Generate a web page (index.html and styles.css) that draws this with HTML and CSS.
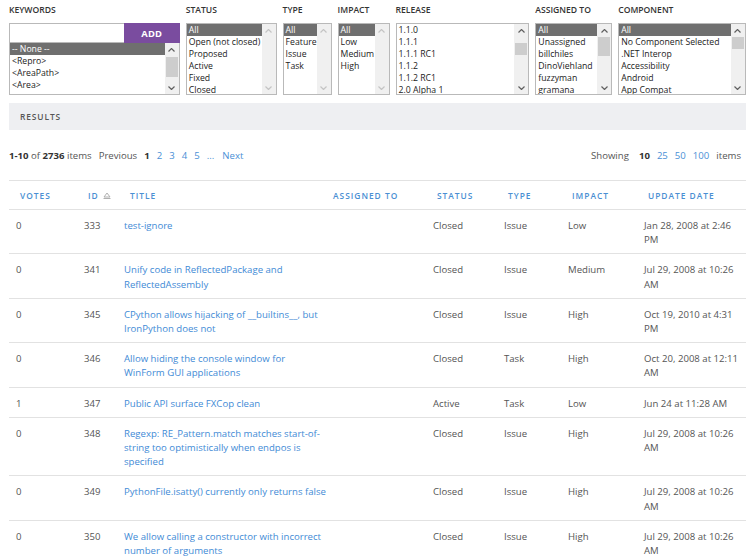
FILE: index.html
```html
<!DOCTYPE html>
<html lang="en">
<head>
<meta charset="utf-8">
<title>Issues</title>
<link rel="stylesheet" href="styles.css">
</head>
<body>
<div class="page">
  <div class="filters">
    <div class="filter f-keywords">
      <div class="flabel">Keywords</div>
      <div class="kw-row">
        <div class="kw-input"></div>
        <button class="add-btn">ADD</button>
      </div>
      <div class="listbox kw-list">
        <ul class="items">
          <li class="sel">-- None --</li>
          <li>&lt;Repro&gt;</li>
          <li>&lt;AreaPath&gt;</li>
          <li>&lt;Area&gt;</li>
        </ul>
        <div class="sbar">
          <div class="sbtn"><svg viewBox="0 0 7 4" width="7" height="4"><polyline points="0.5,3.5 3.5,0.5 6.5,3.5"/></svg></div>
          <div class="track"><div class="thumb" style="margin-top:1px;height:20px"></div></div>
          <div class="sbtn"><svg viewBox="0 0 7 4" width="7" height="4"><polyline points="0.5,0.5 3.5,3.5 6.5,0.5"/></svg></div>
        </div>
      </div>
    </div>

    <div class="filter f-status">
      <div class="flabel">Status</div>
      <div class="listbox">
        <ul class="items">
          <li class="sel">All</li>
          <li>Open (not closed)</li>
          <li>Proposed</li>
          <li>Active</li>
          <li>Fixed</li>
          <li>Closed</li>
        </ul>
        <div class="sbar disabled">
          <div class="sbtn"><svg viewBox="0 0 7 4" width="7" height="4"><polyline points="0.5,3.5 3.5,0.5 6.5,3.5"/></svg></div>
          <div class="track"></div>
          <div class="sbtn"><svg viewBox="0 0 7 4" width="7" height="4"><polyline points="0.5,0.5 3.5,3.5 6.5,0.5"/></svg></div>
        </div>
      </div>
    </div>

    <div class="filter f-type">
      <div class="flabel">Type</div>
      <div class="listbox">
        <ul class="items">
          <li class="sel">All</li>
          <li>Feature</li>
          <li>Issue</li>
          <li>Task</li>
        </ul>
        <div class="sbar disabled">
          <div class="sbtn"><svg viewBox="0 0 7 4" width="7" height="4"><polyline points="0.5,3.5 3.5,0.5 6.5,3.5"/></svg></div>
          <div class="track"></div>
          <div class="sbtn"><svg viewBox="0 0 7 4" width="7" height="4"><polyline points="0.5,0.5 3.5,3.5 6.5,0.5"/></svg></div>
        </div>
      </div>
    </div>

    <div class="filter f-impact">
      <div class="flabel">Impact</div>
      <div class="listbox">
        <ul class="items">
          <li class="sel">All</li>
          <li>Low</li>
          <li>Medium</li>
          <li>High</li>
        </ul>
        <div class="sbar disabled">
          <div class="sbtn"><svg viewBox="0 0 7 4" width="7" height="4"><polyline points="0.5,3.5 3.5,0.5 6.5,3.5"/></svg></div>
          <div class="track"></div>
          <div class="sbtn"><svg viewBox="0 0 7 4" width="7" height="4"><polyline points="0.5,0.5 3.5,3.5 6.5,0.5"/></svg></div>
        </div>
      </div>
    </div>

    <div class="filter f-release">
      <div class="flabel">Release</div>
      <div class="listbox">
        <ul class="items">
          <li>1.1.0</li>
          <li>1.1.1</li>
          <li>1.1.1 RC1</li>
          <li>1.1.2</li>
          <li>1.1.2 RC1</li>
          <li>2.0 Alpha 1</li>
        </ul>
        <div class="sbar">
          <div class="sbtn"><svg viewBox="0 0 7 4" width="7" height="4"><polyline points="0.5,3.5 3.5,0.5 6.5,3.5"/></svg></div>
          <div class="track"><div class="thumb" style="margin-top:6px;height:12px"></div></div>
          <div class="sbtn"><svg viewBox="0 0 7 4" width="7" height="4"><polyline points="0.5,0.5 3.5,3.5 6.5,0.5"/></svg></div>
        </div>
      </div>
    </div>

    <div class="filter f-assigned">
      <div class="flabel">Assigned To</div>
      <div class="listbox">
        <ul class="items">
          <li class="sel">All</li>
          <li>Unassigned</li>
          <li>billchiles</li>
          <li>DinoViehland</li>
          <li>fuzzyman</li>
          <li>gramana</li>
        </ul>
        <div class="sbar">
          <div class="sbtn"><svg viewBox="0 0 7 4" width="7" height="4"><polyline points="0.5,3.5 3.5,0.5 6.5,3.5"/></svg></div>
          <div class="track"><div class="thumb" style="margin-top:0;height:19px"></div></div>
          <div class="sbtn"><svg viewBox="0 0 7 4" width="7" height="4"><polyline points="0.5,0.5 3.5,3.5 6.5,0.5"/></svg></div>
        </div>
      </div>
    </div>

    <div class="filter f-component">
      <div class="flabel">Component</div>
      <div class="listbox">
        <ul class="items">
          <li class="sel">All</li>
          <li>No Component Selected</li>
          <li>.NET Interop</li>
          <li>Accessibility</li>
          <li>Android</li>
          <li>App Compat</li>
        </ul>
        <div class="sbar">
          <div class="sbtn"><svg viewBox="0 0 7 4" width="7" height="4"><polyline points="0.5,3.5 3.5,0.5 6.5,3.5"/></svg></div>
          <div class="track"><div class="thumb" style="margin-top:0;height:12px"></div></div>
          <div class="sbtn"><svg viewBox="0 0 7 4" width="7" height="4"><polyline points="0.5,0.5 3.5,3.5 6.5,0.5"/></svg></div>
        </div>
      </div>
    </div>
  </div>

  <div class="results-bar">Results</div>

  <div class="pager">
    <div class="pager-left">
      <span class="count"><b>1-10</b> of <b>2736</b> items</span>
      <span class="prev">Previous</span>
      <span class="pages"><b>1</b><a>2</a><a>3</a><a>4</a><a>5</a><a>...</a></span>
      <a class="next">Next</a>
    </div>
    <div class="pager-right">
      <span>Showing</span>
      <span class="sizes"><b>10</b><a>25</a><a>50</a><a>100</a></span>
      <span>items</span>
    </div>
  </div>

  <table class="issues">
    <colgroup>
      <col class="c-votes"><col class="c-id"><col class="c-title"><col class="c-assigned">
      <col class="c-status"><col class="c-type"><col class="c-impact"><col class="c-date">
    </colgroup>
    <thead>
      <tr>
        <th>Votes</th>
        <th>ID <svg class="sort" viewBox="0 0 8 7" width="8" height="7"><polygon points="4,1 7,5 1,5"/><line x1="0.5" y1="6.5" x2="7.5" y2="6.5"/></svg></th>
        <th class="th-title">Title</th>
        <th>Assigned To</th>
        <th>Status</th>
        <th>Type</th>
        <th>Impact</th>
        <th>Update Date</th>
      </tr>
    </thead>
    <tbody>
      <tr><td>0</td><td>333</td><td><a>test-ignore</a></td><td></td><td>Closed</td><td>Issue</td><td>Low</td><td>Jan 28, 2008 at 2:46<br>PM</td></tr>
      <tr><td>0</td><td>341</td><td><a>Unify code in ReflectedPackage and<br>ReflectedAssembly</a></td><td></td><td>Closed</td><td>Issue</td><td>Medium</td><td>Jul 29, 2008 at 10:26<br>AM</td></tr>
      <tr><td>0</td><td>345</td><td><a>CPython allows hijacking of __builtins__, but<br>IronPython does not</a></td><td></td><td>Closed</td><td>Issue</td><td>High</td><td>Oct 19, 2010 at 4:31<br>PM</td></tr>
      <tr><td>0</td><td>346</td><td><a>Allow hiding the console window for<br>WinForm GUI applications</a></td><td></td><td>Closed</td><td>Task</td><td>High</td><td>Oct 20, 2008 at 12:11<br>AM</td></tr>
      <tr><td>1</td><td>347</td><td><a>Public API surface FXCop clean</a></td><td></td><td>Active</td><td>Task</td><td>Low</td><td>Jun 24 at 11:28 AM</td></tr>
      <tr><td>0</td><td>348</td><td><a>Regexp: RE_Pattern.match matches start-of-<br>string too optimistically when endpos is<br>specified</a></td><td></td><td>Closed</td><td>Issue</td><td>High</td><td>Jul 29, 2008 at 10:26<br>AM</td></tr>
      <tr><td>0</td><td>349</td><td><a>PythonFile.isatty() currently only returns false</a></td><td></td><td>Closed</td><td>Issue</td><td>High</td><td>Jul 29, 2008 at 10:26<br>AM</td></tr>
      <tr><td>0</td><td>350</td><td><a>We allow calling a constructor with incorrect<br>number of arguments</a></td><td></td><td>Closed</td><td>Issue</td><td>High</td><td>Jul 29, 2008 at 10:26<br>AM</td></tr>
    </tbody>
  </table>
</div>
</body>
</html>
```

FILE: styles.css
```css
* { box-sizing: border-box; }

body {
  margin: 0;
  background: #fff;
  color: #555;
  font-family: "Open Sans", "Noto Sans", sans-serif;
  font-size: 9.6px;
}

.page {
  padding: 0 9px;
}

/* ---------- filters ---------- */
.filters {
  display: flex;
  padding-top: 4px;
}

.filter {
  display: flex;
  flex-direction: column;
  margin-right: 6px;
}
.filter:last-child { margin-right: 0; }

.f-keywords { width: 171px; }
.f-status { width: 91px; }
.f-type { width: 49px; }
.f-impact { width: 52px; }
.f-release { width: 134px; }
.f-assigned { width: 77px; }
.f-component { width: 128px; }

.flabel {
  height: 12px;
  line-height: 12px;
  margin-bottom: 7px;
  font-size: 8.6px;
  font-weight: 600;
  color: #333;
  text-transform: uppercase;
  white-space: nowrap;
}

.kw-row {
  display: flex;
  height: 20px;
}
.kw-input {
  flex: 1;
  border: 1px solid #b9b9b9;
  border-right: none;
  background: #fff;
}
.add-btn {
  width: 56px;
  border: none;
  margin: 0;
  padding: 0;
  background: #7a4c9f;
  color: #fff;
  font-family: inherit;
  font-size: 9.4px;
  font-weight: 700;
  letter-spacing: 0.2px;
}

.listbox {
  display: flex;
  height: 72px;
  border: 1px solid #b9b9b9;
  background: #fff;
  overflow: hidden;
}
.kw-list {
  height: 52px;
  border-top: none;
}

.items {
  flex: 1;
  min-width: 0;
  list-style: none;
  margin: 0;
  padding: 0;
  font-size: 8.7px;
  line-height: 12px;
  color: #222;
}
.items li {
  height: 12px;
  padding-left: 2px;
  white-space: nowrap;
  overflow: hidden;
}
.items li.sel {
  background: #6f6f6f;
  color: #fff;
}

.sbar {
  width: 14px;
  flex: none;
  display: flex;
  flex-direction: column;
  background: #f0f0f0;
}
.sbtn {
  height: 13px;
  flex: none;
  display: flex;
  align-items: center;
  justify-content: center;
}
.sbtn svg polyline {
  fill: none;
  stroke: #606060;
  stroke-width: 1.2;
}
.sbar.disabled .sbtn svg polyline { stroke: #c4c4c4; }
.track {
  flex: 1;
  padding: 0 1px;
}
.thumb {
  background: #cdcdcd;
}

/* ---------- results bar ---------- */
.results-bar {
  margin-top: 8px;
  height: 27px;
  line-height: 27px;
  padding-left: 11px;
  background: #eeeff2;
  color: #555;
  font-size: 8.4px;
  font-weight: 600;
  letter-spacing: 0.9px;
  text-transform: uppercase;
}

/* ---------- pager ---------- */
.pager {
  display: flex;
  justify-content: space-between;
  align-items: center;
  margin-top: 19px;
  height: 14px;
  line-height: 14px;
  padding-right: 5px;
  color: #555;
}
.pager b { color: #333; font-weight: 700; }
.pager a { color: #4a90d6; }
.pager-left, .pager-right {
  display: flex;
  align-items: center;
}
.prev { margin-left: 7px; }
.pages { margin-left: 7px; display: flex; gap: 7px; }
.next { margin-left: 8px; }
.sizes { display: flex; gap: 7px; margin: 0 7px 0 10px; }

/* ---------- table ---------- */
.issues {
  width: 100%;
  margin-top: 17px;
  border-collapse: collapse;
  table-layout: fixed;
}
.c-votes { width: 68px; }
.c-id { width: 40px; }
.c-title { width: 205px; }
.c-assigned { width: 104px; }
.c-status { width: 71px; }
.c-type { width: 64px; }
.c-impact { width: 76px; }
.c-date { width: 109px; }

.issues th {
  height: 29px;
  padding: 0 0 0 11px;
  border-top: 1px solid #e2e2e2;
  border-bottom: 1px solid #e2e2e2;
  text-align: left;
  color: #4a8fd3;
  font-size: 8.4px;
  font-weight: 600;
  letter-spacing: 1px;
  text-transform: uppercase;
  white-space: nowrap;
}
.issues th.th-title { padding-left: 13px; }
.sort {
  margin-left: 1px;
  vertical-align: 0;
}
.sort polygon { fill: none; stroke: #b0b0b0; stroke-width: 1; }
.sort line { stroke: #b0b0b0; stroke-width: 1; }

.issues td {
  padding: 9px 7px 6px;
  border-bottom: 1px solid #e2e2e2;
  vertical-align: top;
  line-height: 14.2px;
  color: #555;
  white-space: nowrap;
}
.issues td a { color: #3f8bd6; }
```
